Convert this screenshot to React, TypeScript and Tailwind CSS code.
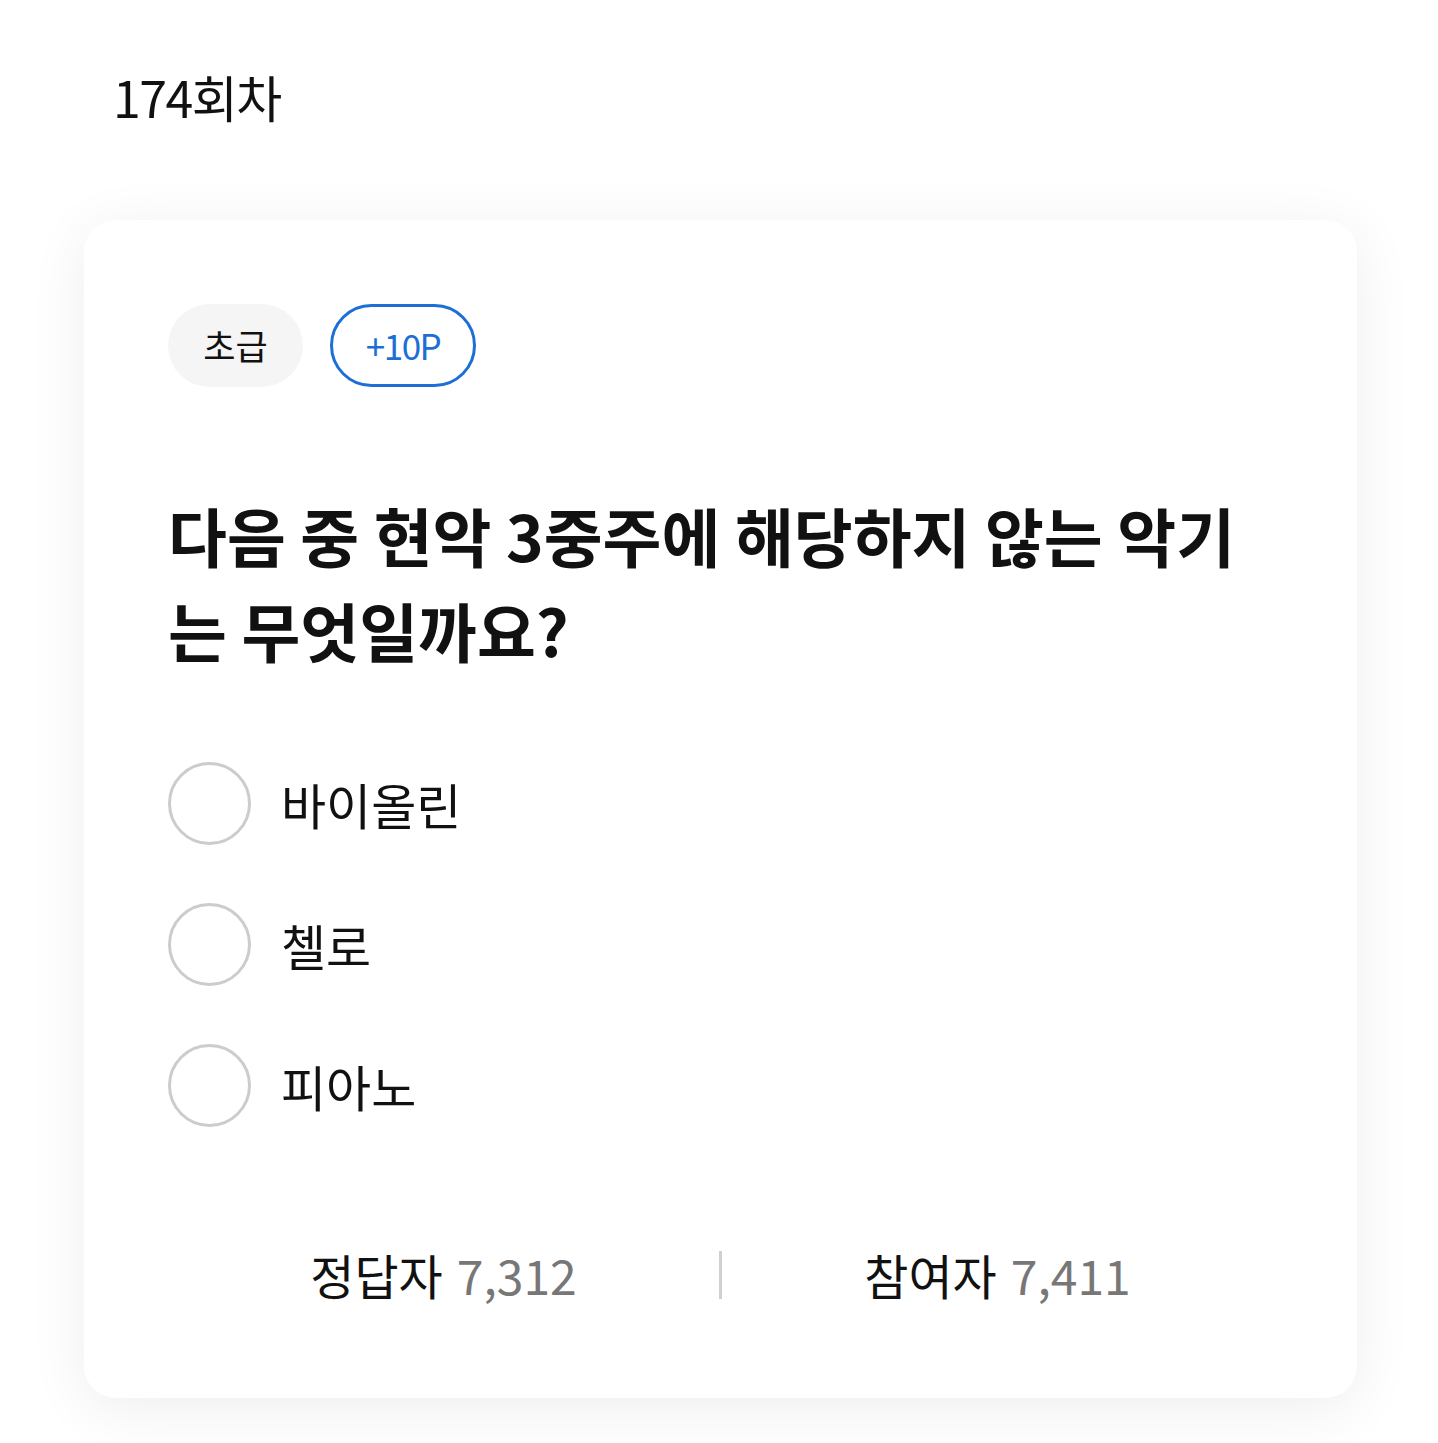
import React from 'react'

const font = { fontFamily: '"Noto Sans CJK KR", "Noto Sans", sans-serif' }

const options = ['바이올린', '첼로', '피아노']

export default function App() {
  return (
    <div className="min-h-[1443px] bg-white pb-[46px]" style={font}>
      <div className="px-[113px] pt-[59px] pb-[86px]">
        <h1 className="text-[50px] leading-[75px] font-normal text-[#111] tracking-[-1.5px]">174회차</h1>
      </div>

      <div className="mx-[84px] w-[1273px] rounded-[32px] bg-white px-[84px] pt-[84px] pb-[86px] shadow-[0_10px_60px_rgba(0,0,0,0.07)]">
        {/* 뱃지 */}
        <div className="flex items-center gap-[27px]">
          <span className="flex h-[83px] w-[135px] items-center justify-center rounded-full bg-[#f5f5f5] text-[35px] text-[#111]">
            초급
          </span>
          <span className="flex h-[83px] w-[146px] items-center justify-center rounded-full border-[3px] border-[#1c6fd6] text-[35px] text-[#1c6fd6] tracking-[-1.5px]">
            +10P
          </span>
        </div>

        {/* 문제 */}
        <h2 className="mt-[100px] text-[64px] font-bold leading-[95px] text-[#111]">
          다음 중 현악 3중주에 해당하지 않는 악기는 무엇일까요?
        </h2>

        {/* 보기 */}
        <ul className="mt-[85px] flex flex-col gap-[58px]">
          {options.map((o) => (
            <li key={o} className="flex items-center gap-[30px]">
              <span className="h-[83px] w-[83px] shrink-0 rounded-full border-[3px] border-[#cccccc]" />
              <span className="text-[49px] leading-none text-[#111]">{o}</span>
            </li>
          ))}
        </ul>

        {/* 통계 */}
        <div className="mt-[110px] flex items-center">
          <div className="flex flex-1 justify-center text-[48px] leading-[75px] text-[#111]">
            정답자<span className="ml-[14px] text-[#777]">7,312</span>
          </div>
          <div className="h-[48px] w-[3px] bg-[#d0d0d0]" />
          <div className="flex flex-1 justify-center text-[48px] leading-[75px] text-[#111]">
            참여자<span className="ml-[14px] text-[#777]">7,411</span>
          </div>
        </div>
      </div>
    </div>
  )
}
